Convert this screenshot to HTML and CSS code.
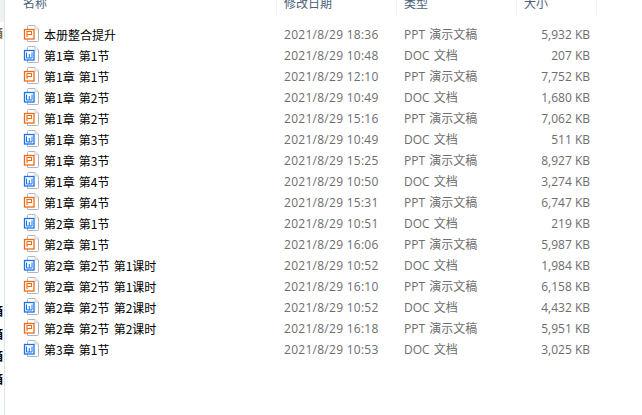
FILE: index.html
```html
<!DOCTYPE html>
<html lang="zh-CN">
<head>
    <meta charset="UTF-8">
    <title>文件列表</title>
    <link rel="stylesheet" href="styles.css">
</head>
<body>
    <svg class="defs" width="0" height="0">
        <symbol id="page" viewBox="0 0 17 18">
            <path d="M4.500 1.500a1 1 0 0 1 1-1h6.500l3.500 3.500v11.500a1 1 0 0 1-1 1h-10z" fill="#fff" stroke="#b0b4c0"/>
            <path d="M12 .5v3.500h3.500" fill="#f2f3f6" stroke="#ced1d8"/>
        </symbol>
        <symbol id="ppt" viewBox="0 0 17 18">
            <use href="#page"/>
            <rect x="1.500" y="4.500" width="9.500" height="9.500" fill="#fff" stroke="#ef6a12" stroke-width="1.300"/>
            <path d="M4 12v-5.500h4.500v3h-4.500" fill="none" stroke="#ef6a12" stroke-width="1.100"/>
        </symbol>
        <symbol id="doc" viewBox="0 0 17 18">
            <use href="#page"/>
            <rect x="1.500" y="4.500" width="9.500" height="9.500" fill="#fff" stroke="#1872ea" stroke-width="1.300"/>
            <path d="M3.500 6.500v5.500h5.500v-5.500M6.300 8v4" fill="none" stroke="#1872ea"/>
        </symbol>
    </svg>

    <div class="window">
        <!-- 左侧导航，只露出一点点 -->
        <aside class="sidebar">
            <div class="side-top"></div>
            <div class="side-item side-a">箱</div>
            <div class="side-item side-b">x</div>
            <div class="side-item side-c">x</div>
            <div class="side-item side-d">箱</div>
            <div class="side-item">箱</div>
            <div class="side-item">箱</div>
            <div class="side-item">箱</div>
        </aside>

        <main class="list">
            <div class="head">
                <div class="head-cell">名称</div>
                <div class="head-cell">修改日期</div>
                <div class="head-cell">类型</div>
                <div class="head-cell">大小</div>
            </div>

            <div class="row"><div class="name"><svg class="icon"><use href="#ppt"/></svg>本册整合提升</div><div class="date">2021/8/29 18:36</div><div class="type">PPT 演示文稿</div><div class="size">5,932 KB</div></div>
            <div class="row"><div class="name"><svg class="icon"><use href="#doc"/></svg>第1章 第1节</div><div class="date">2021/8/29 10:48</div><div class="type">DOC 文档</div><div class="size">207 KB</div></div>
            <div class="row"><div class="name"><svg class="icon"><use href="#ppt"/></svg>第1章 第1节</div><div class="date">2021/8/29 12:10</div><div class="type">PPT 演示文稿</div><div class="size">7,752 KB</div></div>
            <div class="row"><div class="name"><svg class="icon"><use href="#doc"/></svg>第1章 第2节</div><div class="date">2021/8/29 10:49</div><div class="type">DOC 文档</div><div class="size">1,680 KB</div></div>
            <div class="row"><div class="name"><svg class="icon"><use href="#ppt"/></svg>第1章 第2节</div><div class="date">2021/8/29 15:16</div><div class="type">PPT 演示文稿</div><div class="size">7,062 KB</div></div>
            <div class="row"><div class="name"><svg class="icon"><use href="#doc"/></svg>第1章 第3节</div><div class="date">2021/8/29 10:49</div><div class="type">DOC 文档</div><div class="size">511 KB</div></div>
            <div class="row"><div class="name"><svg class="icon"><use href="#ppt"/></svg>第1章 第3节</div><div class="date">2021/8/29 15:25</div><div class="type">PPT 演示文稿</div><div class="size">8,927 KB</div></div>
            <div class="row"><div class="name"><svg class="icon"><use href="#doc"/></svg>第1章 第4节</div><div class="date">2021/8/29 10:50</div><div class="type">DOC 文档</div><div class="size">3,274 KB</div></div>
            <div class="row"><div class="name"><svg class="icon"><use href="#ppt"/></svg>第1章 第4节</div><div class="date">2021/8/29 15:31</div><div class="type">PPT 演示文稿</div><div class="size">6,747 KB</div></div>
            <div class="row"><div class="name"><svg class="icon"><use href="#doc"/></svg>第2章 第1节</div><div class="date">2021/8/29 10:51</div><div class="type">DOC 文档</div><div class="size">219 KB</div></div>
            <div class="row"><div class="name"><svg class="icon"><use href="#ppt"/></svg>第2章 第1节</div><div class="date">2021/8/29 16:06</div><div class="type">PPT 演示文稿</div><div class="size">5,987 KB</div></div>
            <div class="row"><div class="name"><svg class="icon"><use href="#doc"/></svg>第2章 第2节 第1课时</div><div class="date">2021/8/29 10:52</div><div class="type">DOC 文档</div><div class="size">1,984 KB</div></div>
            <div class="row"><div class="name"><svg class="icon"><use href="#ppt"/></svg>第2章 第2节 第1课时</div><div class="date">2021/8/29 16:10</div><div class="type">PPT 演示文稿</div><div class="size">6,158 KB</div></div>
            <div class="row"><div class="name"><svg class="icon"><use href="#doc"/></svg>第2章 第2节 第2课时</div><div class="date">2021/8/29 10:52</div><div class="type">DOC 文档</div><div class="size">4,432 KB</div></div>
            <div class="row"><div class="name"><svg class="icon"><use href="#ppt"/></svg>第2章 第2节 第2课时</div><div class="date">2021/8/29 16:18</div><div class="type">PPT 演示文稿</div><div class="size">5,951 KB</div></div>
            <div class="row"><div class="name"><svg class="icon"><use href="#doc"/></svg>第3章 第1节</div><div class="date">2021/8/29 10:53</div><div class="type">DOC 文档</div><div class="size">3,025 KB</div></div>
        </main>
    </div>
</body>
</html>
```

FILE: styles.css
```css
html, body {
    height: 100%;
    margin: 0;
    overflow: hidden;
    background-color: #fff;
}
body {
    font-family: "Open Sans", "Noto Sans CJK SC", sans-serif;
    font-size: 12px;
}
.defs {
    display: block;
}
.window {
    display: flex;
    height: 415px;
}
.sidebar {
    width: 4px;
    flex: none;
    overflow: hidden;
    border-right: 1px solid #d9e6f4;
    direction: rtl;
    text-align: left;
    color: #000;
}
.side-top {
    height: 22px;
    background-color: #f0f0f0;
}
.side-item {
    height: 16px;
    line-height: 16px;
    margin-bottom: 6.5px;
    margin-left: -9px;
    font-family: "Noto Sans CJK SC", sans-serif;
    font-weight: 700;
    white-space: nowrap;
}
.side-a {
    margin-top: 3px;
    margin-bottom: 8px;
    color: #7a6a30;
}
.side-b {
    margin-bottom: 31px;
}
.side-c {
    margin-bottom: 191px;
    color: #2c4a5a;
}
.list {
    flex: 1;
    min-width: 0;
    padding-left: 18px;
}
.head,
.row {
    display: grid;
    grid-template-columns: 254px 120px 120px 80px;
}
.head {
    height: 14px;
    margin-top: -4px;
    margin-bottom: 14px;
    color: #4c607a;
}
.head-cell {
    padding-left: 7px;
    line-height: 16px;
    height: 18px;
    border-right: 1px solid #eef2f7;
    box-sizing: border-box;
}
.head-cell:first-child {
    padding-left: 0;
}
.row {
    height: 21px;
    line-height: 21px;
    color: #6d6d6d;
    white-space: nowrap;
}
.name {
    display: flex;
    color: #000;
    font-family: "Noto Sans CJK SC", sans-serif;
    word-spacing: 1.5px;
}
.icon {
    width: 17px;
    height: 18px;
    margin: 1px 4px 2px 0;
    flex: none;
}
.date {
    padding-left: 7px;
    letter-spacing: .27px;
}
.type {
    padding-left: 7px;
    word-spacing: 1px;
}
.size {
    text-align: right;
    padding-right: 7px;
}
```
